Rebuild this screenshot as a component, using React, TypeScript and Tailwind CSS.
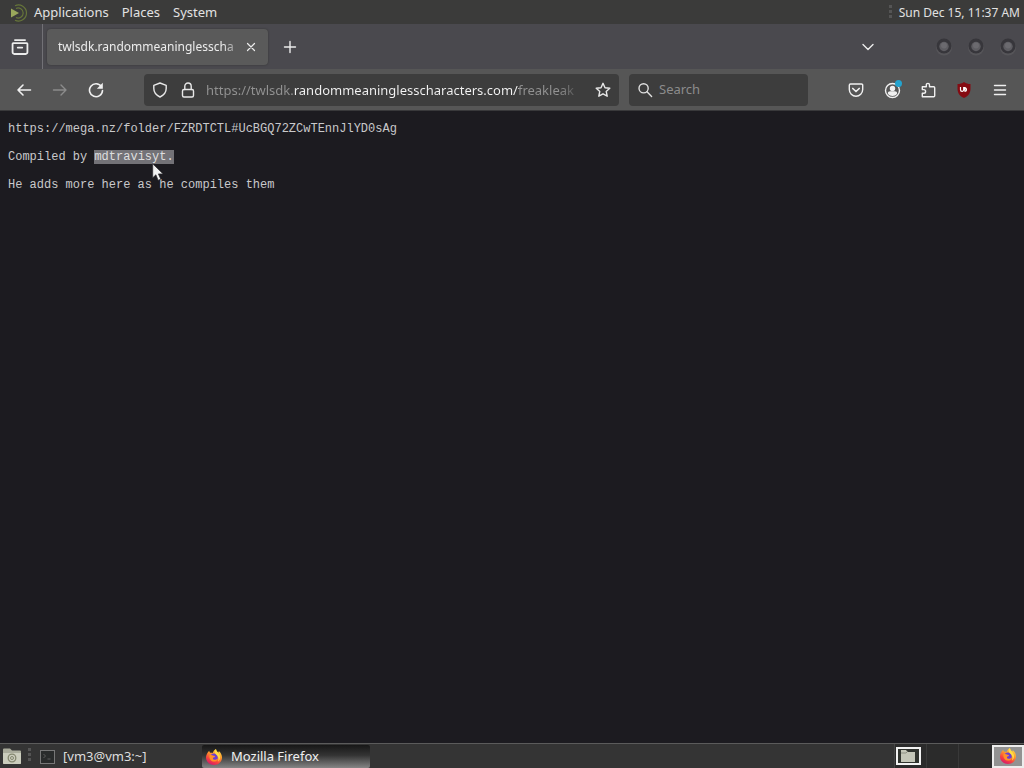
import React from 'react';

type IconProps = { children: React.ReactNode; className?: string };

function Icon({ children, className = 'size-4' }: IconProps) {
  return (
    <svg
      viewBox="0 0 16 16"
      className={`${className} shrink-0`}
      fill="none"
      stroke="currentColor"
      strokeWidth="1.4"
      strokeLinecap="round"
      strokeLinejoin="round"
      aria-hidden="true"
    >
      {children}
    </svg>
  );
}

function ToolButton({ label, children, dim = false }: { label: string; children: React.ReactNode; dim?: boolean }) {
  return (
    <button
      type="button"
      aria-label={label}
      className={`flex size-9 shrink-0 items-center justify-center ${dim ? 'text-[#8c8c8c]' : 'text-[#f0f0f0]'}`}
    >
      {children}
    </button>
  );
}

function Grip() {
  return (
    <svg viewBox="0 0 4 18" className="h-[18px] w-1 shrink-0" fill="#555" aria-hidden="true">
      <rect x="0" y="1" width="3" height="3" />
      <rect x="0" y="6" width="3" height="3" />
      <rect x="0" y="11" width="3" height="3" />
    </svg>
  );
}

function FirefoxLogo({ id }: { id: string }) {
  return (
    <svg viewBox="0 0 18 18" className="size-[18px] shrink-0" aria-hidden="true">
      <defs>
        <linearGradient id={`${id}-body`} x1="0.8" y1="0" x2="0.3" y2="1">
          <stop offset="0" stopColor="#ffe14a" />
          <stop offset="0.4" stopColor="#ff9a2b" />
          <stop offset="0.72" stopColor="#f8423f" />
          <stop offset="1" stopColor="#d3186d" />
        </linearGradient>
      </defs>
      <path
        d="M4.2 2.8C4.3 3.8 4.7 4.4 5.3 4.8 6 4.6 7 4.6 7.7 4.9 8.4 3.2 9.4 1.8 11 1c.1 1.6 1 2.5 2.3 3.6.4-.3.5-.9.4-1.6 2.2 1.7 3.4 4.2 3.3 6.8-.2 4.1-3.6 7.2-8 7.2S1 13.7 1 9.6C1 7 2.3 4.7 4.2 2.8Z"
        fill={`url(#${id}-body)`}
      />
      <circle cx="9" cy="9.2" r="3.7" fill="#6b3fd0" />
      <path d="M4.3 7.4c1.6-.9 3-.5 4.1.4 1 .1 1.7.2 1.6.8-.2.7-1.2.8-1.9 1.2-.5 1 .2 2 1.500 2 1.500 0 2-.9 3.100-.5-.6 1.500-2 2.300-3.600 2.300-2.800 0-4.800-2.200-4.800-6.200Z" fill="#ff9128" />
      <path d="M11 1c.1 3 3.600 3.900 4 7.400.2 2.200-.6 4-2 5 1.300-3 .2-5.500-2-7C9.400 5.300 9.600 2.600 11 1Z" fill="#ffdd43" />
    </svg>
  );
}

function DesktopPanel() {
  return (
    <header className="flex h-6 shrink-0 items-center justify-between bg-[#3b3b3a] pt-px pr-1 pl-2 text-[13px] text-[#e2e2e2]">
      <nav className="flex items-center gap-[13px]" aria-label="Desktop">
        <a href="#applications" className="flex items-center gap-1">
          <svg viewBox="0 0 22 20" className="h-5 w-[22px]" fill="none" aria-hidden="true">
            <path d="M3 5.500v9L11 10Z" fill="#9aa85c" />
            <path d="M7 2.800a8 8 0 1 1 0 14.400" stroke="#66753a" strokeWidth="1.200" />
            <path d="M8 5.500a5 5 0 1 1 0 9" stroke="#66753a" strokeWidth="1.200" />
          </svg>
          Applications
        </a>
        <a href="#places">Places</a>
        <a href="#system">System</a>
      </nav>
      <div className="flex items-center gap-[6px]">
        <Grip />
        <time dateTime="12-15T11:37" className="text-[12px]">Sun Dec 15, 11:37 AM</time>
      </div>
    </header>
  );
}

function WindowButton({ label }: { label: string }) {
  return (
    <button type="button" aria-label={label} className="flex w-8 items-center justify-center">
      <svg viewBox="0 0 18 18" className="size-[18px]" aria-hidden="true">
        <circle cx="9" cy="9.500" r="8" fill="#565559" />
        <circle cx="9" cy="8" r="7.500" fill="#37363b" />
        <circle cx="9" cy="8.500" r="4.700" fill="#5e5d62" />
        <circle cx="9" cy="7.500" r="3" fill="#6b6a6f" />
      </svg>
    </button>
  );
}

function TabStrip() {
  return (
    <div className="flex h-[45px] shrink-0 items-center bg-[#4a494e] text-[#ececec]">
      <button type="button" aria-label="Recent browsing" className="flex h-full w-[43px] shrink-0 items-center justify-center border-r border-[#727176] pr-[2px]">
        <Icon className="size-[18px]">
          <path d="M3.500 1.800h9M2 4.500h12a.6.600 0 0 1 .6.600v7.600a1.500 1.500 0 0 1-1.500 1.500H2.900a1.500 1.500 0 0 1-1.500-1.500V5.100a.6.600 0 0 1 .6-.6ZM6 8.500h4" strokeWidth="1.600" />
        </Icon>
      </button>
      <div className="ml-1 flex h-9 w-[221px] shrink-0 items-center rounded-[4px] bg-[#5a5a5a] pr-[9px] pl-[11px] shadow-[0_0_2px_#333]">
        <a href="#tab" className="min-w-0 flex-1 overflow-hidden pt-px text-[12px] whitespace-nowrap [mask-image:linear-gradient(to_left,transparent,black_20px)]">
          twlsdk.randommeaninglesscha
        </a>
        <button type="button" aria-label="Close tab" className="flex size-4 shrink-0 items-center justify-center">
          <Icon className="size-4"><path d="m4.500 4.500 7 7m0-7-7 7" strokeWidth="1.200" /></Icon>
        </button>
      </div>
      <button type="button" aria-label="New tab" className="ml-1 flex size-9 items-center justify-center">
        <Icon><path d="M8 2.500v11M2.500 8h11" /></Icon>
      </button>
      <div className="ml-auto flex items-center">
        <button type="button" aria-label="List all tabs" className="mr-[42px] flex size-9 items-center justify-center">
          <Icon><path d="m3 5.500 5 5 5-5" /></Icon>
        </button>
        <WindowButton label="Minimize" />
        <WindowButton label="Maximize" />
        <WindowButton label="Close" />
      </div>
    </div>
  );
}

function NavigationBar() {
  return (
    <div className="flex h-[42px] shrink-0 items-center border-b border-[#39393b] bg-[#565656] px-[6px]">
      <ToolButton label="Back"><Icon><path d="M14.500 8H2m5-5L2 8l5 5" strokeWidth="1.600" /></Icon></ToolButton>
      <ToolButton label="Forward" dim><Icon><path d="M1.500 8H14M9 3l5 5-5 5" /></Icon></ToolButton>
      <ToolButton label="Reload">
        <Icon><path d="M13.400 4.600A6.500 6.500 0 1 0 14.500 8.500" strokeWidth="1.600" /><path d="M14.800.800v6H8.800Z" fill="currentColor" stroke="none" /></Icon>
      </ToolButton>
      <div className="ml-[30px] flex h-8 min-w-0 flex-1 items-center rounded-[4px] bg-[#3d3d3d] px-2 text-[#e8e8e8]">
        <button type="button" aria-label="Tracking protection" className="flex w-4 justify-center">
          <Icon><path d="M8 1 14.200 3.300v3.200c0 4-2.500 6.700-6.200 8.500-3.700-1.800-6.200-4.500-6.200-8.500V3.300Z" /></Icon>
        </button>
        <button type="button" aria-label="Connection secure" className="ml-3 flex w-4 justify-center">
          <Icon><rect x="2.500" y="7.500" width="11" height="7.500" rx="1.500" /><path d="M4.800 7.500V4.200a3.200 3.200 0 0 1 6.400 0v3.300" /></Icon>
        </button>
        <input
          aria-label="Address"
          defaultValue="https://twlsdk.randommeaninglesscharacters.com/freakleak"
          className="ml-[10px] h-8 min-w-0 flex-1 bg-[linear-gradient(90deg,#929292_88px,#f4f4f4_88px,#f4f4f4_313px,#929292_313px)] bg-clip-text text-[13px] text-transparent outline-none [mask-image:linear-gradient(to_left,transparent,black_24px)]"
        />
        <button type="button" aria-label="Bookmark" className="ml-3 flex w-4 justify-center">
          <Icon><path d="m8 1.300 2 4.400 4.800.5-3.600 3.200 1 4.800L8 11.800l-4.200 2.400 1-4.800L1.200 6.200 6 5.700Z" /></Icon>
        </button>
      </div>
      <label className="ml-[10px] flex h-8 w-[179px] shrink-0 items-center gap-[6px] rounded-[4px] bg-[#3d3d3d] px-2 text-[#e0e0e0]">
        <Icon><circle cx="6.600" cy="6.300" r="4.600" /><path d="m10 9.800 4.600 4.600" /></Icon>
        <input aria-label="Search" placeholder="Search" className="min-w-0 flex-1 bg-transparent text-[13px] outline-none placeholder:text-[#8c8c8c]" />
      </label>
      <div className="ml-[30px] flex shrink-0">
        <ToolButton label="Save to Pocket">
          <Icon><path d="M2.500 2h11A1.200 1.200 0 0 1 14.700 3.200v4.300a6.700 6.700 0 0 1-13.400 0V3.200A1.200 1.200 0 0 1 2.500 2Z" /><path d="m4.800 6.500 3.200 3 3.200-3" strokeWidth="1.700" /></Icon>
        </ToolButton>
        <ToolButton label="Account">
          <svg viewBox="0 0 20 20" className="size-5" aria-hidden="true">
            <circle cx="10.500" cy="10.500" r="7" fill="none" stroke="#f0f0f0" strokeWidth="1.400" />
            <circle cx="10.500" cy="8.500" r="2.700" fill="#f0f0f0" />
            <path d="M5.800 13.500c0-1.500 1-2.300 2.400-2.300h4.600c1.400 0 2.400.8 2.400 2.300-1.200 1.800-2.800 2.500-4.700 2.500s-3.500-.7-4.700-2.500Z" fill="#f0f0f0" />
            <circle cx="16.500" cy="3.500" r="3.500" fill="#23a3cf" />
          </svg>
        </ToolButton>
        <ToolButton label="Extensions">
          <Icon><path d="M2.300 4.800h4V3a1.600 1.600 0 0 1 3.200 0v1.800h4.200a1 1 0 0 1 1 1v8a1 1 0 0 1-1 1H2.300v-3.600h1.500a1.800 1.800 0 0 0 0-3.600H2.300Z" /></Icon>
        </ToolButton>
        <ToolButton label="uBlock Origin">
          <svg viewBox="0 0 16 16" className="size-4" aria-hidden="true">
            <path d="M8 0c2 1.500 4 2 6.500 2v4.500c0 5-2.500 7.500-6.500 9.500-4-2-6.500-4.500-6.500-9.500V2C4 2 6 1.500 8 0Z" fill="#850b12" />
            <path d="M4.500 5v2.700a1.600 1.600 0 0 0 3.200 0V5M8.900 5v4.200h.8a2 2 0 0 0 0-3.200h-.8" fill="none" stroke="#fff" strokeWidth="1.200" />
          </svg>
        </ToolButton>
        <ToolButton label="Open application menu">
          <Icon><path d="M2.500 3.500h11M2.500 8h11M2.500 12.500h11" /></Icon>
        </ToolButton>
      </div>
    </div>
  );
}

function PageContent() {
  return (
    <main className="flex-1 bg-[#1c1b20] px-2 py-[11px] font-['Courier_New','Liberation_Mono',monospace] text-[12px] leading-[14px] text-[#c9c9cb]">
      <p className="mb-[14px]">https://mega.nz/folder/FZRDTCTL#UcBGQ72ZCwTEnnJlYD0sAg</p>
      <p className="mb-[14px]">
        Compiled by{' '}
        <span className="relative inline-block bg-[#737277] text-[#dededf]">
          mdtravisyt.
          <svg viewBox="0 0 12 19" className="absolute top-[13px] left-[58px] h-[19px] w-3" aria-hidden="true">
            <path d="M.7.800v14l3.200-3 2.200 5.500 2.700-1.100-2.400-5.300h4.700Z" fill="#f2f2f2" stroke="#29282d" strokeWidth=".7" />
          </svg>
        </span>
      </p>
      <p>He adds more here as he compiles them</p>
    </main>
  );
}

function Taskbar() {
  return (
    <footer className="flex h-[25px] shrink-0 items-center border-t border-[#5b5b5b] bg-[#343434] text-[13px] text-[#dedede]">
      <button type="button" aria-label="Show files" className="ml-[2px] flex">
        <svg viewBox="0 0 20 18" className="h-[18px] w-5" aria-hidden="true">
          <path d="M1 2.500a1 1 0 0 1 1-1h6l2 2h8a1 1 0 0 1 1 1V16a1 1 0 0 1-1 1H2a1 1 0 0 1-1-1Z" fill="#a9ab9b" />
          <path d="M1 6h18v10a1 1 0 0 1-1 1H2a1 1 0 0 1-1-1Z" fill="#cbcdbd" />
          <circle cx="10" cy="11" r="3.800" fill="none" stroke="#84876f" strokeWidth="1.300" />
          <circle cx="10" cy="11" r="1.500" fill="none" stroke="#84876f" />
        </svg>
      </button>
      <div className="ml-[6px] flex"><Grip /></div>
      <button type="button" className="ml-2 flex h-full w-[162px] items-center gap-2 pt-px text-left">
        <svg viewBox="0 0 15 14" className="h-[14px] w-[15px]" fill="#292b2b" stroke="#777" aria-hidden="true">
          <rect x=".5" y=".5" width="14" height="13" />
          <path d="m3.500 4 2 2-2 2m4 1h3" stroke="#5d5d5d" />
        </svg>
        [vm3@vm3:~]
      </button>
      <button type="button" className="flex h-[23px] w-[168px] items-center gap-2 rounded-[2px] bg-[linear-gradient(#171717,#343434_45%,#858585)] pt-px pl-[3px] text-left text-[#f0f0f0]">
        <FirefoxLogo id="task" />
        Mozilla Firefox
      </button>
      <div className="ml-auto flex h-full items-center bg-[#2b2b2b]">
        <button type="button" aria-label="Workspace 1" className="flex h-full w-8 items-center justify-center border-l border-[#444] pr-1">
          <svg viewBox="0 0 25 18" className="h-[18px] w-[25px]" aria-hidden="true">
            <rect x="1" y="1" width="23" height="16" fill="#30332e" stroke="#f2f2f2" strokeWidth="2" />
            <path d="M5 3h5l1.500 2H19v10H5Z" fill="#c4c6b8" />
            <path d="M5 6h5l1.500-1.500" fill="none" stroke="#8e9084" />
          </svg>
        </button>
        <button type="button" aria-label="Workspace 2" className="h-full w-8 border-l border-[#393939]" />
        <button type="button" aria-label="Workspace 3" className="h-full w-[34px] border-l border-[#393939]" />
        <button type="button" aria-label="Workspace 4" className="flex h-[23px] w-8 items-center justify-center border-2 border-[#ededed] bg-[#929292]">
          <FirefoxLogo id="workspace" />
        </button>
      </div>
    </footer>
  );
}

export default function App() {
  return (
    <div className="flex min-h-screen flex-col bg-[#1c1b20] font-['Noto_Sans',sans-serif]">
      <DesktopPanel />
      <TabStrip />
      <NavigationBar />
      <PageContent />
      <Taskbar />
    </div>
  );
}
